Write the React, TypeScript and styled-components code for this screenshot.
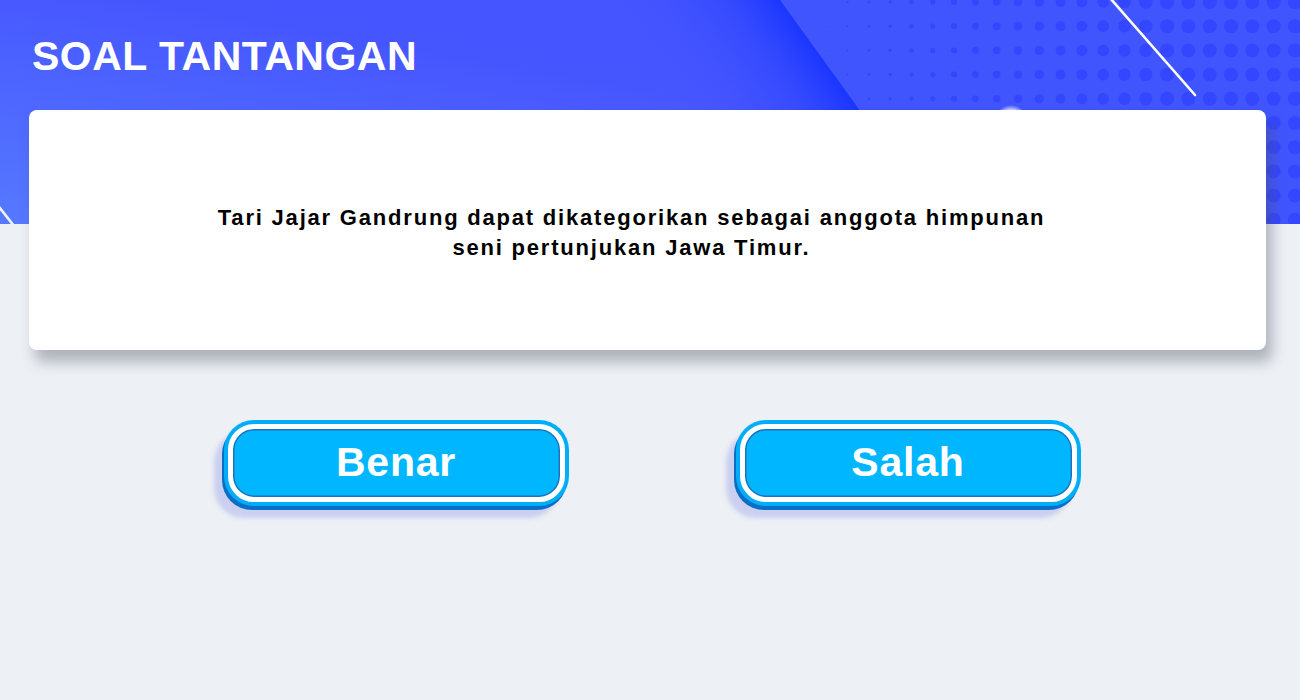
import React from "react";
import styled, { createGlobalStyle } from "styled-components";

const GlobalStyle = createGlobalStyle`
  html, body {
    margin: 0;
    padding: 0;
    background: #edf0f5;
  }
  body {
    font-family: "Liberation Sans", Arial, sans-serif;
  }
`;

// header decoration, drawn as svg and used as a background image
const buildDecor = () => {
  let dots = "";
  for (let x = 805; x < 1310; x += 21.3) {
    for (let y = 2; y < 230; y += 24.2) {
      const r = Math.min(7, Math.max(0.6, ((x - 795) / 370) * 7));
      dots += `<circle cx="${x.toFixed(1)}" cy="${y.toFixed(1)}" r="${r.toFixed(2)}" fill="#3446ff"/>`;
    }
  }
  const svg = `<svg xmlns="http://www.w3.org/2000/svg" width="1300" height="224" viewBox="0 0 1300 224">
    <defs>
      <linearGradient id="band" gradientUnits="userSpaceOnUse" x1="822" y1="55" x2="700" y2="140">
        <stop offset="0" stop-color="#1733ff" stop-opacity="0.95"/>
        <stop offset="0.35" stop-color="#2a42ff" stop-opacity="0.5"/>
        <stop offset="1" stop-color="#4657ff" stop-opacity="0"/>
      </linearGradient>
      <radialGradient id="glow">
        <stop offset="0.6" stop-color="#ffffff"/>
        <stop offset="1" stop-color="#ffffff" stop-opacity="0"/>
      </radialGradient>
    </defs>
    <polygon points="780,0 1300,0 1300,224 942,224" fill="#4155ff"/>
    ${dots}
    <polygon points="560,0 780,0 942,224 700,224" fill="url(#band)"/>
    <line x1="1110" y1="-2" x2="1195" y2="95" stroke="#ffffff" stroke-width="2.6" stroke-linecap="round"/>
    <line x1="-4" y1="203" x2="14" y2="226" stroke="#ffffff" stroke-opacity="0.9" stroke-width="2.6"/>
    <circle cx="1011" cy="122" r="17" fill="url(#glow)"/>
  </svg>`;
  return `url("data:image/svg+xml,${encodeURIComponent(svg)}")`;
};

const Page = styled.div<{ $decor: string }>`
  min-height: 700px;
  background: ${(p) => p.$decor} top left / 1300px 224px no-repeat,
    linear-gradient(190deg, #4354ff 0%, #4656ff 45%, #5679ff 100%) top left / 100% 224px no-repeat,
    #edf0f5;
  overflow: hidden;
`;

const Header = styled.header`
  height: 110px;
  display: flex;
  align-items: center;
  padding-left: 32px;
  box-sizing: border-box;
`;

const Title = styled.h1`
  margin: 0;
  margin-top: 2px;
  color: #ffffff;
  font-family: "Liberation Sans", Arial, sans-serif;
  font-weight: 700;
  font-size: 41px;
  letter-spacing: 0.5px;
`;

const QuestionCard = styled.section`
  margin: 0 34px 0 29px;
  height: 240px;
  background: #ffffff;
  border-radius: 8px;
  box-shadow: 6px 12px 14px rgba(70, 78, 92, 0.38);
  display: flex;
  align-items: center;
  justify-content: center;
  padding: 6px 32px 0 0;
  box-sizing: border-box;
`;

const Question = styled.p`
  margin: 0;
  max-width: 900px;
  text-align: center;
  color: #000000;
  font-family: "Liberation Sans", Arial, sans-serif;
  font-weight: 700;
  font-size: 22px;
  line-height: 30px;
  letter-spacing: 1.8px;
`;

const Answers = styled.div`
  display: flex;
  justify-content: center;
  gap: 167px;
  margin-top: 70px;
  padding-left: 4px;
`;

const AnswerButton = styled.button`
  width: 345px;
  height: 86px;
  padding: 4px;
  border: none;
  border-radius: 30px;
  background: #00aef8;
  box-shadow: -2px 4px 0 #0b6ec6, -10px 12px 4px rgba(196, 202, 240, 0.85);
  cursor: pointer;
  box-sizing: border-box;
`;

const AnswerFace = styled.span`
  display: flex;
  align-items: center;
  justify-content: center;
  height: 100%;
  border: 5px solid #ffffff;
  border-radius: 26px;
  background: #00b7ff;
  box-shadow: inset 0 0 0 1.5px #2270bb;
  box-sizing: border-box;
  color: #ffffff;
  font-family: "Liberation Sans", Arial, sans-serif;
  font-weight: 700;
  font-size: 41px;
  letter-spacing: 0.8px;
  padding-bottom: 2px;
`;

export default function App() {
  const decor = React.useMemo(buildDecor, []);
  return (
    <Page $decor={decor}>
      <GlobalStyle />
      <Header>
        <Title>SOAL TANTANGAN</Title>
      </Header>
      <QuestionCard>
        <Question>
          Tari Jajar Gandrung dapat dikategorikan sebagai anggota himpunan
          <br />
          seni pertunjukan Jawa Timur.
        </Question>
      </QuestionCard>
      <Answers>
        <AnswerButton>
          <AnswerFace>Benar</AnswerFace>
        </AnswerButton>
        <AnswerButton>
          <AnswerFace>Salah</AnswerFace>
        </AnswerButton>
      </Answers>
    </Page>
  );
}
